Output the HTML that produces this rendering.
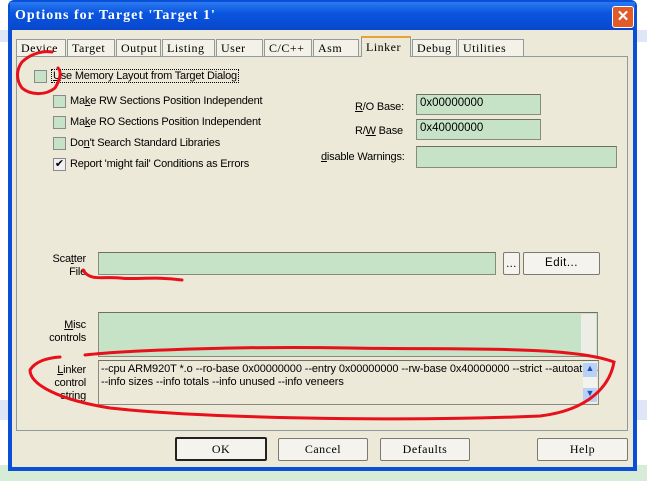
<!DOCTYPE html>
<html><head><style>
body{margin:0;width:647px;height:481px;position:relative;overflow:hidden;background:#fff;font-family:"Liberation Sans",sans-serif;font-size:11px;color:#000}
.a{position:absolute}
.mono{font-family:"Liberation Mono",monospace;font-size:11px}
.tab{position:absolute;top:39px;height:17px;border:1px solid #919b9c;border-bottom:none;background:#f3f1e8;font-family:"Liberation Serif",serif;font-size:12px;line-height:17px;padding-left:4px;box-sizing:border-box;letter-spacing:.5px}
.cb{position:absolute;width:11px;height:11px;border:1px solid #8a8a8a;background:#c7e3c7}
.fld{position:absolute;background:#c7e3c7;border:1px solid #8a8a80;border-top-color:#716f64;box-sizing:border-box}
.btn{position:absolute;background:#f4f3ee;border:1px solid #7a7a70;box-sizing:border-box;font-family:"Liberation Serif",serif;font-size:12px;text-align:center;line-height:21px;border-radius:2px;letter-spacing:.5px}
.lbl{position:absolute;font-size:11px;white-space:nowrap;letter-spacing:-.2px}
</style></head><body>
<div class="a" style="left:0;top:30px;width:647px;height:12px;background:#dfe6f5"></div>
<div class="a" style="left:0;top:465px;width:647px;height:16px;background:#d7ecd7"></div>
<div class="a" style="left:0;top:400px;width:647px;height:20px;background:#dfe6f5"></div>
<div class="a" style="left:8px;top:0;width:629px;height:471px;background:#0a4fd8;border-radius:6px 6px 0 0"></div>
<div class="a" style="left:10px;top:2px;width:625px;height:28px;background:linear-gradient(#2b7af0,#0a55e0 40%,#0847cc)"></div>
<div class="a" style="left:15px;top:8px;color:#fff;font-size:14px;font-weight:bold;font-family:'Liberation Serif',serif;letter-spacing:1px">Options for Target 'Target 1'</div>
<div class="a" style="left:612px;top:6px;width:20px;height:20px;background:#e05a2a;border:1px solid #fff;border-radius:3px;color:#fff;font-weight:bold;font-size:15px;text-align:center;line-height:20px">✕</div>
<div class="a" style="left:12px;top:30px;width:621px;height:437px;background:#ece9d8"></div>
<div class="a" style="left:16px;top:56px;width:612px;height:375px;background:#f6f4ec;border:1px solid #919b9c;box-sizing:border-box"></div>
<div class="a" style="left:17px;top:57px;width:610px;height:373px;background:#ece9d8"></div>
<div class="tab" style="left:16px;width:50px">Device</div>
<div class="tab" style="left:67px;width:48px">Target</div>
<div class="tab" style="left:116px;width:45px">Output</div>
<div class="tab" style="left:162px;width:53px">Listing</div>
<div class="tab" style="left:216px;width:47px">User</div>
<div class="tab" style="left:264px;width:48px">C/C++</div>
<div class="tab" style="left:313px;width:46px">Asm</div>
<div class="tab" style="left:361px;width:50px;top:36px;height:21px;background:#ece9d8;border-top:2px solid #e8a23c;line-height:18px">Linker</div>
<div class="tab" style="left:412px;width:45px">Debug</div>
<div class="tab" style="left:458px;width:66px">Utilities</div>
<div class="cb" style="left:34px;top:70px"></div>
<div class="lbl" style="left:51px;top:69px;border:1px dotted #000;padding:0 1px"><u>U</u>se Memory Layout from Target Dialog</div>
<div class="cb" style="left:53px;top:95px"></div><div class="lbl" style="left:70px;top:95px">Ma<u>k</u>e RW Sections Position Independent</div>
<div class="cb" style="left:53px;top:116px"></div><div class="lbl" style="left:70px;top:116px">Ma<u>k</u>e RO Sections Position Independent</div>
<div class="cb" style="left:53px;top:137px"></div><div class="lbl" style="left:70px;top:137px">Do<u>n</u>'t Search Standard Libraries</div>
<div class="cb" style="left:53px;top:158px;background:#f0f0f0;font-size:11px;line-height:11px;text-align:center">✔</div><div class="lbl" style="left:70px;top:158px">Report 'might fail' Conditions as Errors</div>
<div class="lbl" style="left:355px;top:101px"><u>R</u>/O Base:</div>
<div class="fld" style="left:416px;top:94px;width:125px;height:21px;padding:2px 3px;font-size:11.5px">0x00000000</div>
<div class="lbl" style="left:355px;top:125px">R/<u>W</u> Base</div>
<div class="fld" style="left:416px;top:119px;width:125px;height:21px;padding:2px 3px;font-size:11.5px">0x40000000</div>
<div class="lbl" style="left:321px;top:151px"><u>d</u>isable Warnings:</div>
<div class="fld" style="left:416px;top:146px;width:201px;height:22px"></div>
<div class="lbl" style="left:36px;top:253px;width:50px;text-align:right;line-height:13px">Sca<u>t</u>ter<br>File</div>
<div class="fld" style="left:98px;top:252px;width:398px;height:23px"></div>
<div class="btn" style="left:503px;top:252px;width:17px;height:23px">...</div>
<div class="btn" style="left:523px;top:252px;width:77px;height:23px;font-family:'Liberation Sans';font-size:11.5px">Edit...</div>
<div class="lbl" style="left:36px;top:319px;width:50px;text-align:right;line-height:13px"><u>M</u>isc<br>controls</div>
<div class="fld" style="left:98px;top:312px;width:500px;height:45px"></div>
<div class="a" style="left:581px;top:314px;width:15px;height:41px;background:#eeede5"></div>
<div class="lbl" style="left:36px;top:364px;width:50px;text-align:right;line-height:13px"><u>L</u>inker<br>control<br>string</div>
<div class="fld" style="left:98px;top:360px;width:501px;height:45px;background:#ece9d8;overflow:hidden"><div style="padding:2px 2px;font-size:11px;white-space:nowrap;line-height:13px;letter-spacing:-.1px">--cpu ARM920T *.o --ro-base 0x00000000 --entry 0x00000000 --rw-base 0x40000000 --strict --autoat --s<br>--info sizes --info totals --info unused --info veneers</div></div>
<div class="a" style="left:583px;top:362px;width:14px;height:41px;background:#f2f2ee"></div>
<div class="a" style="left:583px;top:363px;width:14px;height:14px;background:#b9d0f7;font-size:9px;text-align:center;color:#2050b0">▲</div>
<div class="a" style="left:583px;top:388px;width:14px;height:14px;background:#b9d0f7;font-size:9px;text-align:center;color:#2050b0">▼</div>
<div class="btn" style="left:175px;top:437px;width:92px;height:24px;border:2px solid #222">OK</div>
<div class="btn" style="left:278px;top:438px;width:90px;height:23px">Cancel</div>
<div class="btn" style="left:380px;top:438px;width:90px;height:23px">Defaults</div>
<div class="btn" style="left:537px;top:438px;width:91px;height:23px">Help</div>
<svg class="a" style="left:0;top:0" width="647" height="481">
<g fill="none" stroke="#e8101a" stroke-width="3" stroke-linecap="round">
<path d="M52 52 C40 50 28 56 22 62 C16 70 16 80 22 88 C30 95 45 96 55 88 C60 80 62 72 58 68"/>
<path d="M83 270 C90 282 105 276 120 278 C135 280 155 276 182 280"/>
<path d="M85 355 C130 350 250 346 350 348 C450 350 570 345 614 362 C610 385 590 410 540 416 C400 422 200 418 110 408 C60 400 30 385 30 370 C35 362 45 358 60 357"/>
</g></svg>
</body></html>
